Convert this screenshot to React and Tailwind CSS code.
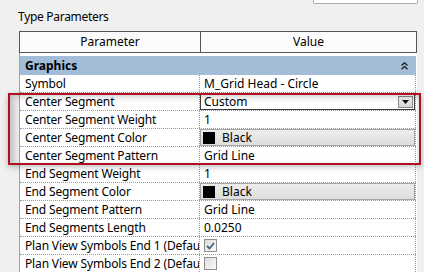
const font = { fontFamily: '"Noto Sans", "Open Sans", sans-serif' };

const rows = [
  { name: "Symbol", value: "M_Grid Head - Circle" },
  { name: "Center Segment", kind: "select", value: "Custom" },
  { name: "Center Segment Weight", value: "1" },
  { name: "Center Segment Color", kind: "color", value: "Black" },
  { name: "Center Segment Pattern", value: "Grid Line" },
  { name: "End Segment Weight", value: "1" },
  { name: "End Segment Color", kind: "color", value: "Black" },
  { name: "End Segment Pattern", value: "Grid Line" },
  { name: "End Segments Length", value: "0.0250" },
  { name: "Plan View Symbols End 1 (Default)", kind: "check", checked: true },
  { name: "Plan View Symbols End 2 (Default)", kind: "check", checked: false },
];

function ValueCell({ row }) {
  if (row.kind === "select") {
    return (
      <div className="flex items-center h-full w-full bg-white border border-[#3c3c3c]">
        <span className="pl-[3px] flex-1">{row.value}</span>
        <div className="w-[15px] h-[12px] mr-[1px] bg-gradient-to-b from-[#f4f4f4] to-[#d4d4d4] border border-[#8a8a8a] flex items-center justify-center">
          <svg width="7" height="4" viewBox="0 0 7 4">
            <path d="M0 0h7L3.5 4z" fill="#111" />
          </svg>
        </div>
      </div>
    );
  }
  if (row.kind === "color") {
    return (
      <div className="flex items-center h-full w-full bg-gradient-to-b from-[#ededed] to-[#dedede] border border-[#a5a5a5]">
        <div className="w-[12px] h-[12px] bg-black ml-[2px]" />
        <span className="ml-[7px]">{row.value}</span>
      </div>
    );
  }
  if (row.kind === "check") {
    return (
      <div className="flex items-center h-full pl-[4px]">
        <div className="w-[13px] h-[13px] border border-[#8e8f8f] bg-gradient-to-br from-[#dcdcdc] to-[#fbfbfb] flex items-center justify-center">
          {row.checked && (
            <svg width="9" height="8" viewBox="0 0 9 8">
              <path d="M1 4l2.5 2.5L8 1" stroke="#4a5f7c" strokeWidth="1.8" fill="none" />
            </svg>
          )}
        </div>
      </div>
    );
  }
  return <span className="pl-[4px]">{row.value}</span>;
}

export default function App() {
  return (
    <div className="relative w-[424px] h-[272px] overflow-hidden bg-[#f0f0f0] text-[12px] text-black" style={font}>
      <div className="flex justify-end pr-[6px] h-[4px]">
        <div className="w-[105px] h-[4px] bg-white border border-t-0 border-[#acacac] rounded-b-[2px]" />
      </div>
      <p className="pl-[18px] mt-[5px] leading-[16px] tracking-[-0.3px]">Type Parameters</p>

      <div className="ml-[19px] mt-[6px] w-[398px]">
        <div className="flex h-[22px] bg-[#fbfbfb] border border-[#555]">
          <div className="w-[181px] border-r border-[#555] flex items-center justify-center">Parameter</div>
          <div className="flex-1 flex items-center justify-center">Value</div>
        </div>
        <div className="bg-white border-l border-[#a0a0a0] pt-[3px]">
          <div className="flex items-center justify-between h-[19px] bg-[#a3bdd9] pl-[5px] pr-[8px] mr-[1px]">
            <span className="font-bold">Graphics</span>
            <svg width="7" height="8" viewBox="0 0 7 8">
              <path d="M0.5 3.5L3.5 0.8L6.5 3.5M0.5 7.2L3.5 4.5L6.5 7.2" stroke="#222" strokeWidth="1.4" fill="none" />
            </svg>
          </div>
          {rows.map((row) => (
            <div key={row.name} className="flex h-[18px] border-b border-dotted border-[#9a9a9a] mr-[1px]">
              <div className="w-[180px] pl-[5px] border-r border-dotted border-[#9a9a9a] whitespace-nowrap overflow-hidden flex items-center tracking-[-0.15px]">
                {row.name}
              </div>
              <div className="flex-1 flex items-center border-r border-dotted border-[#9a9a9a]">
                <ValueCell row={row} />
              </div>
            </div>
          ))}
        </div>
      </div>

      <div className="absolute left-[8px] top-[93px] w-[413px] h-[72px] border-2 border-[#b3101d] shadow-[0_2px_6px_rgba(0,0,0,0.25),inset_4px_2px_6px_rgba(0,0,0,0.2)]" />
    </div>
  );
}
